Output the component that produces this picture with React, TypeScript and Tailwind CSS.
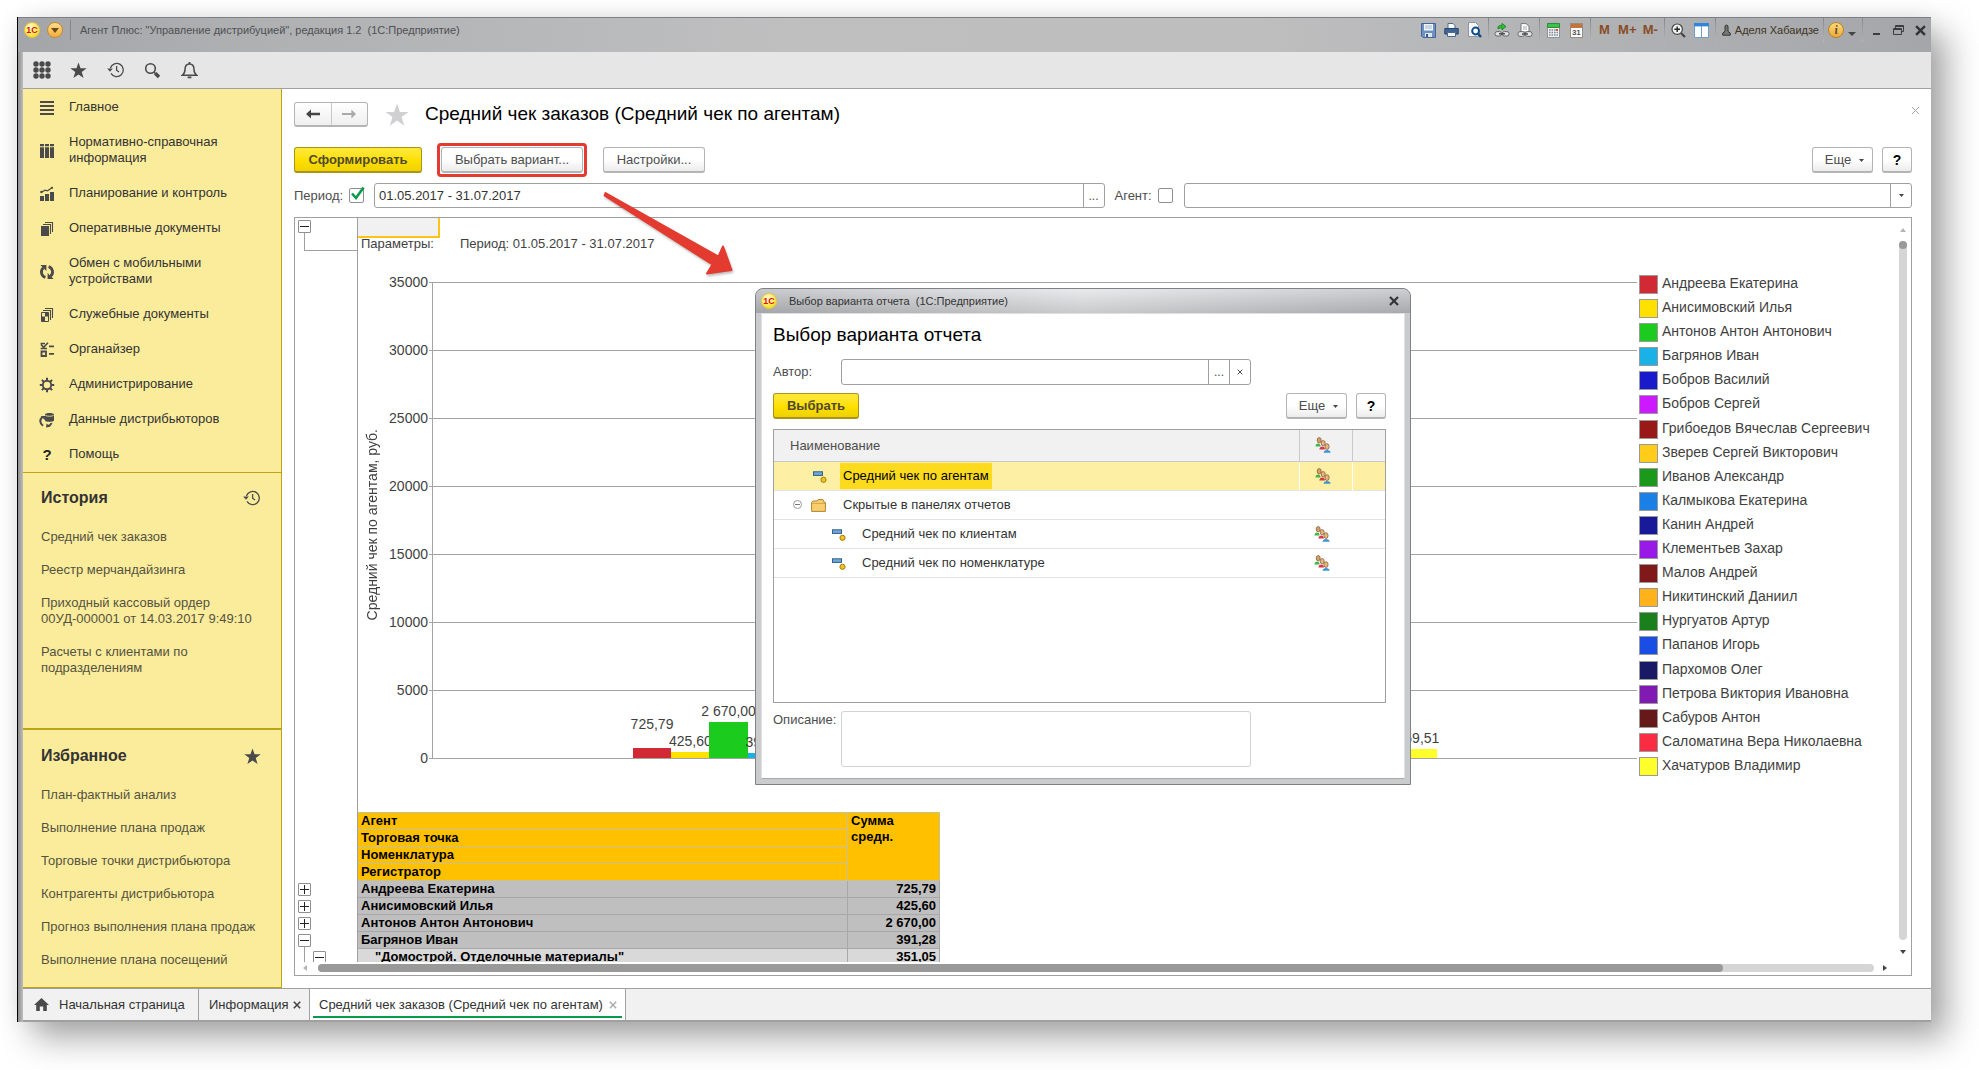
import React from "react";

const ink = "#4a4a4a";

function LogoIcon() {
  return (
    <span className="flex h-4 w-4 shrink-0 items-center justify-center rounded-full border border-[#e8c93a] bg-[radial-gradient(circle_at_40%_30%,#fffbd0,#ffe84a_60%,#f5c400)] text-[9px] leading-none font-bold text-[#e0101a]">
      1С
    </span>
  );
}

function StarIcon({ size = 17, color = ink }: { size?: number; color?: string }) {
  return (
    <svg width={size} height={size} viewBox="0 0 20 20" fill={color}>
      <path d="M10 0.5 12.4 7.4H19.6L13.8 11.7 16 18.9 10 14.6 4 18.9 6.2 11.7 0.4 7.4H7.6Z" />
    </svg>
  );
}

function HistoryIcon() {
  return (
    <svg width="18" height="18" viewBox="0 0 18 18" fill="none" stroke={ink} strokeWidth="1.3">
      <path d="M4 12.4A6.6 6.6 0 1 0 3.4 7" />
      <path d="M0.2 7.6H5.8L3 10.8Z" fill={ink} stroke="none" />
      <path d="M9.6 5V9.2L12 11" />
    </svg>
  );
}

function GridIcon() {
  return (
    <svg width="18" height="18" viewBox="0 0 18 18" fill={ink}>
      {[3, 9, 15].map((y) => [3, 9, 15].map((x) => <circle key={`${x}-${y}`} cx={x} cy={y} r="2.7" />))}
    </svg>
  );
}

function SearchIcon() {
  return (
    <svg width="17" height="17" viewBox="0 0 17 17" fill="none" stroke={ink}>
      <circle cx="6.5" cy="6.5" r="4.8" strokeWidth="1.6" />
      <path d="M10 10 11.4 11.4" strokeWidth="1.4" />
      <path d="M11.2 11.2 15 15" strokeWidth="3.4" />
    </svg>
  );
}

function BellIcon() {
  return (
    <svg width="17" height="18" viewBox="0 0 17 18" fill="none" stroke={ink} strokeWidth="1.5">
      <path d="M1.5 14.2C3.4 12.8 4 11.6 4 8.6 4 5 5.6 3 8.5 3S13 5 13 8.6C13 11.6 13.6 12.8 15.5 14.2Z" />
      <path d="M8.5 3V1M6.6 16.4H10.4" strokeWidth="1.8" />
    </svg>
  );
}

type MenuIconName = "lines" | "catalog" | "plan" | "docs" | "sync" | "service" | "organizer" | "gear" | "data" | "help";

function MenuIcon({ name }: { name: MenuIconName }) {
  if (name === "help") return <span className="text-[15px] font-bold text-[#222]">?</span>;
  return (
    <svg width="16" height="16" viewBox="0 0 16 16" fill={ink} stroke="none">
      {name === "lines" && <path d="M1 1H15V3H1ZM1 5H15V7H1ZM1 9H15V11H1ZM1 13H15V15H1Z" />}
      {name === "catalog" && (
        <path d="M1 1H5V3.2H1ZM6 1H10V3.2H6ZM11 1H15V3.2H11ZM1 4.2H5V15H1ZM6 4.2H10V15H6ZM11 4.2H15V15H11Z" />
      )}
      {name === "plan" && (
        <>
          <path d="M1 10H5V15H1ZM6 8H10V15H6ZM11 6H15V15H11Z" />
          <path d="M2 6.5 6 4.2 8.5 4.8 13 1.8" fill="none" stroke={ink} strokeWidth="1.3" />
          <circle cx="2.4" cy="6" r="1.2" />
          <circle cx="13" cy="1.8" r="1.1" />
        </>
      )}
      {name === "docs" && (
        <>
          <path d="M2 5H10V15H2Z" />
          <path d="M4 3.5H11.5V13M6 1.5H13.5V11" fill="none" stroke={ink} strokeWidth="1.1" />
        </>
      )}
      {name === "service" && (
        <>
          <path d="M2.5 5.5H9.5V14.5H2.5Z" fill="none" stroke={ink} />
          <path d="M6 6H9.5V9.5H6ZM3 9.5H6V14H3Z" />
          <path d="M4 3.5H11.5V13M6 1.5H13.5V11" fill="none" stroke={ink} strokeWidth="1.1" />
        </>
      )}
      {name === "sync" && (
        <>
          <path d="M6.4 13.4A5.6 5.6 0 0 1 4.4 3.8M9.6 2.6A5.6 5.6 0 0 1 11.6 12.2" fill="none" stroke={ink} strokeWidth="2.8" />
          <path d="M1.4 1H7.4V7ZM14.6 15H8.6V9Z" />
        </>
      )}
      {name === "organizer" && (
        <>
          <path d="M2.5 9.5H7V14H2.5Z" fill="none" stroke={ink} strokeWidth="1.8" />
          <path d="M1.6 1.5H6M1.6 6.5H8M2 2.5 4.6 5.4 9 0.8" fill="none" stroke={ink} strokeWidth="1.6" />
          <path d="M10 3.5H15V5.3H10ZM10 11H15V12.8H10Z" />
        </>
      )}
      {name === "gear" && (
        <>
          <circle cx="8" cy="8" r="4.2" fill="none" stroke={ink} strokeWidth="1.9" />
          <path
            d="M8 0.8V4M8 12V15.2M0.8 8H4M12 8H15.2M2.9 2.9 5 5M11 11 13.1 13.1M2.9 13.1 5 11M11 5 13.1 2.9"
            fill="none"
            stroke={ink}
            strokeWidth="2"
          />
        </>
      )}
      {name === "data" && (
        <>
          <path d="M6 2.4C6 0.4 15 0.4 15 2.4V8.4C15 10.2 6 10.2 6 8.4Z" />
          <path d="M6.4 3.4C8 4.6 13 4.6 14.6 3.4" fill="none" stroke="#fbec9c" strokeWidth="0.8" />
          <path d="M4 13.8C0.4 11 0.6 7.4 3.4 5" fill="none" stroke={ink} strokeWidth="2" />
          <path d="M1.6 4H6V8ZM7 15.4 7.6 11.4 11.4 14.8Z" />
          <path d="M9 14C11 13.6 12 12.6 12.6 11" fill="none" stroke={ink} strokeWidth="2" />
        </>
      )}
    </svg>
  );
}

function Caret() {
  return (
    <svg width="5" height="3" viewBox="0 0 5 3" fill="#444">
      <path d="M0 0H5L2.5 3Z" />
    </svg>
  );
}

function CrossIcon({ size, color, width }: { size: number; color: string; width: number }) {
  return (
    <svg width={size} height={size} viewBox="0 0 10 10" stroke={color} strokeWidth={width}>
      <path d="M1 1 9 9M9 1 1 9" />
    </svg>
  );
}

function PeopleIcon() {
  return (
    <svg width="16" height="16" viewBox="0 0 16 16">
      <path d="M0.5 9.4C0.5 5.6 5.6 5.6 5.6 9.4Z" fill="#3fb54a" />
      <ellipse cx="4.2" cy="3.2" rx="2" ry="2.7" fill="#d9a066" stroke="#7a5230" strokeWidth="0.7" />
      <path d="M4.4 12.4C4.4 8.4 10 8.4 10 12.4Z" fill="#d63a4a" />
      <ellipse cx="8.2" cy="6.2" rx="2" ry="2.7" fill="#e8b57c" stroke="#7a5230" strokeWidth="0.7" />
      <path d="M8.6 15.8C8.6 12 15.6 12 15.6 15.8Z" fill="#3a94d6" />
      <ellipse cx="12" cy="9.6" rx="2.1" ry="2.9" fill="#e8b57c" stroke="#7a5230" strokeWidth="0.7" />
    </svg>
  );
}

function VariantIcon() {
  return (
    <svg width="14" height="12" viewBox="0 0 14 12">
      <rect x="0.5" y="0.8" width="9" height="3.6" fill="#6fa8d8" stroke="#2f5f8c" />
      <circle cx="10.5" cy="8.8" r="2.6" fill="#f0c322" stroke="#a37b0a" />
    </svg>
  );
}

function FolderIcon() {
  return (
    <svg width="15" height="13" viewBox="0 0 15 13">
      <path d="M0.6 3.4 2 2H6L7 0.6H12L13 2.6V3.6H14.4V12.4H0.6Z" fill="#f7cf70" stroke="#b5832a" />
      <path d="M1 4.4H14" stroke="#d6a548" />
    </svg>
  );
}

function TitleSep() {
  return <span className="mx-0.5 h-6 w-px shrink-0 bg-gradient-to-b from-[#85878a] to-[#b5b6b8]" />;
}

function TitleButton({ label, children }: { label: string; children: React.ReactNode }) {
  return (
    <button type="button" aria-label={label} className="flex h-6 w-[23px] items-center justify-center">
      {children}
    </button>
  );
}

function WindowButton({ label, children }: { label: string; children: React.ReactNode }) {
  return (
    <button type="button" aria-label={label} className="flex h-6 w-[22px] items-center justify-center">
      {children}
    </button>
  );
}

function TitleBar() {
  return (
    <header className="flex h-[35px] shrink-0 items-start border-t border-[#7d7f82] bg-[linear-gradient(90deg,#a3a5a8,#aeb0b2_12%,#bfbfc0_40%,#bebebf_65%,#a4a6a9)] text-[11px] text-[#4f5054]">
      <div className="flex h-6 items-center gap-[7px] pl-[6px]">
        <LogoIcon />
        <button
          type="button"
          aria-label="Главное меню"
          className="flex h-4 w-4 items-center justify-center rounded-full border border-[#c98a2b] bg-[linear-gradient(#ffdf8e,#f3ab3c)]"
        >
          <svg width="8" height="5" viewBox="0 0 8 5" fill="#6b4a1c">
            <path d="M0 0H8L4 5Z" />
          </svg>
        </button>
        <span className="h-5 w-px bg-[#85878a]" />
        <span className="pl-0.5 whitespace-pre">
          {'Агент Плюс: "Управление дистрибуцией", редакция 1.2  (1С:Предприятие)'}
        </span>
      </div>
      <div className="ml-auto flex h-6 items-center">
        <TitleButton label="Сохранить">
          <svg width="15" height="15" viewBox="0 0 15 15">
            <path d="M0.5 0.5H14.5V14.5H2L0.5 13Z" fill="#6d92c2" stroke="#44659a" />
            <path d="M3 1H12V7.5H3Z" fill="#f2f6fb" />
            <path d="M4 3H11M4 5H11" stroke="#9fb4cf" />
            <path d="M4 10H11V14H4Z" fill="#dfe6ef" />
            <path d="M5 11H7V14H5Z" fill="#34568a" />
          </svg>
        </TitleButton>
        <TitleButton label="Печать">
          <svg width="15" height="14" viewBox="0 0 15 14">
            <path d="M4 0.5H9L11 2.5V6H4Z" fill="#fff" stroke="#4a6a96" />
            <path d="M0.8 5.5H14.2V11H0.8Z" fill="#3f6596" stroke="#2a4468" />
            <path d="M3.5 9.5H11.5V13.5H3.5Z" fill="#f4f6fa" stroke="#4a6a96" />
          </svg>
        </TitleButton>
        <TitleButton label="Предварительный просмотр">
          <svg width="15" height="16" viewBox="0 0 15 16">
            <path d="M1.5 0.5H8.5L11.5 3.5V14.5H1.5Z" fill="#f7f7f7" stroke="#8996a8" />
            <circle cx="8.6" cy="9" r="3.4" fill="#fff" stroke="#0f4a86" strokeWidth="2" />
            <path d="M11 11.6 14 15" stroke="#0f4a86" strokeWidth="2.4" />
          </svg>
        </TitleButton>
        <TitleSep />
        <TitleButton label="Получить ссылку">
          <svg width="16" height="15" viewBox="0 0 16 15">
            <path d="M4 4C5 2.4 6 2.4 8 2.4V0.4L12 3.6 8 6.8V4.8C6.4 4.8 5.4 5 4 6Z" fill="#2fc32f" stroke="#0f7a1a" strokeWidth="0.8" />
            <rect x="1" y="8.6" width="6.6" height="4.4" rx="2" fill="#e4e4e4" stroke="#666" />
            <rect x="8.4" y="8.6" width="6.6" height="4.4" rx="2" fill="#e4e4e4" stroke="#666" />
            <path d="M5 10.8H11" stroke="#444" strokeWidth="1.4" />
          </svg>
        </TitleButton>
        <TitleButton label="Перейти по ссылке">
          <svg width="16" height="15" viewBox="0 0 16 15">
            <path d="M4 0.6H9L12 3.4V9H4Z" fill="#fff" stroke="#777" />
            <path d="M6 4H10M6 6H10" stroke="#aaa" />
            <rect x="1" y="8.6" width="6.6" height="4.8" rx="2" fill="#e4e4e4" stroke="#666" />
            <rect x="8.4" y="8.6" width="6.6" height="4.8" rx="2" fill="#e4e4e4" stroke="#666" />
            <path d="M5 11H11" stroke="#444" strokeWidth="1.4" />
          </svg>
        </TitleButton>
        <TitleSep />
        <TitleButton label="Калькулятор">
          <svg width="13" height="15" viewBox="0 0 13 15">
            <path d="M0.5 0.5H12.5V14.5H0.5Z" fill="#f2f2f2" stroke="#8c9298" />
            <path d="M0.5 0.5H12.5V4.5H0.5Z" fill="#3cc24a" stroke="#2a8f38" />
            <path d="M2 7H11M2 9.5H11M2 12H11" stroke="#7d8894" strokeWidth="1.4" strokeDasharray="1.6 0.9" />
            <path d="M9 7H11" stroke="#d33" strokeWidth="1.4" />
          </svg>
        </TitleButton>
        <TitleButton label="Календарь">
          <span className="flex h-[15px] w-[13px] flex-col border border-[#9a8a80] bg-white">
            <span className="h-1 shrink-0 bg-[#c5743a]" />
            <span className="text-center text-[8px] leading-[9px] font-bold text-[#555]">31</span>
          </span>
        </TitleButton>
        <TitleSep />
        {["M", "M+", "M-"].map((m) => (
          <button key={m} type="button" className="h-6 w-[23px] text-center text-[13px] font-bold text-[#8a4b25]">
            {m}
          </button>
        ))}
        <TitleSep />
        <TitleButton label="Масштаб">
          <svg width="15" height="15" viewBox="0 0 15 15">
            <circle cx="6.2" cy="6.2" r="5.2" fill="#f2f2f2" stroke="#444" strokeWidth="1.2" />
            <path d="M3.4 6.2H9M6.2 3.4V9" stroke="#222" strokeWidth="1.4" />
            <path d="M10.2 10.2 14 14" stroke="#444" strokeWidth="2.2" />
          </svg>
        </TitleButton>
        <TitleButton label="Панели">
          <svg width="15" height="15" viewBox="0 0 15 15">
            <path d="M0.5 0.5H14.5V14.5H0.5Z" fill="#fff" stroke="#6f9cc8" />
            <path d="M0 0H15V3.4H0Z" fill="#2f86dd" />
            <path d="M7.5 3V15" stroke="#6f9cc8" />
          </svg>
        </TitleButton>
        <TitleSep />
        <button type="button" className="flex h-6 items-center gap-1 pr-0.5 pl-1 text-[#3e3422]">
          <svg width="9" height="12" viewBox="0 0 9 12" fill="#777" stroke="#333">
            <path d="M0.8 11.2V9L3 7.4V3A1.5 2 0 0 1 6 3V7.4L8.2 9V11.2Z" />
          </svg>
          Аделя Хабаидзе
        </button>
        <TitleSep />
        <button
          type="button"
          aria-label="Информация о программе"
          className="ml-0.5 flex h-4 w-4 items-center justify-center rounded-full border border-[#b98427] bg-[linear-gradient(#ffd877,#eda93a)] font-serif text-[11px] leading-none font-bold text-[#5a4a30] italic"
        >
          i
        </button>
        <span className="flex w-4 justify-center pt-2">
          <svg width="8" height="4" viewBox="0 0 8 4" fill="#444">
            <path d="M0 0H8L4 4Z" />
          </svg>
        </span>
        <TitleSep />
        <WindowButton label="Свернуть">
          <span className="mt-2 h-0.5 w-[7px] bg-[#3d3d3d]" />
        </WindowButton>
        <WindowButton label="Восстановить">
          <svg width="11" height="10" viewBox="0 0 11 10" fill="none" stroke="#3d3d3d">
            <path d="M2.5 3V0.5H10.5V6.5H8.5M2.5 1.5H10.5" />
            <path d="M0.5 3.5H8.5V9.5H0.5ZM0.5 4.5H8.5" />
          </svg>
        </WindowButton>
        <WindowButton label="Закрыть">
          <CrossIcon size={11} color="#333" width={2.2} />
        </WindowButton>
      </div>
    </header>
  );
}

const tools: [string, React.ReactNode][] = [
  ["Меню функций", <GridIcon />],
  ["Избранное", <StarIcon />],
  ["История", <HistoryIcon />],
  ["Поиск", <SearchIcon />],
  ["Оповещения", <BellIcon />],
];

const menu: [MenuIconName, string][] = [
  ["lines", "Главное"],
  ["catalog", "Нормативно-справочная информация"],
  ["plan", "Планирование и контроль"],
  ["docs", "Оперативные документы"],
  ["sync", "Обмен с мобильными устройствами"],
  ["service", "Служебные документы"],
  ["organizer", "Органайзер"],
  ["gear", "Администрирование"],
  ["data", "Данные дистрибьюторов"],
  ["help", "Помощь"],
];

const history = [
  "Средний чек заказов",
  "Реестр мерчандайзинга",
  "Приходный кассовый ордер 00УД-000001 от 14.03.2017 9:49:10",
  "Расчеты с клиентами по подразделениям",
];

const favourites = [
  "План-фактный анализ",
  "Выполнение плана продаж",
  "Торговые точки дистрибьютора",
  "Контрагенты дистрибьютора",
  "Прогноз выполнения плана продаж",
  "Выполнение плана посещений",
];

function LinkSection({ title, icon, items }: { title: string; icon: React.ReactNode; items: string[] }) {
  return (
    <>
      <div className="flex h-12 items-center justify-between pt-0.5 pr-5 pl-[18px]">
        <h2 className="text-base font-bold text-[#333]">{title}</h2>
        {icon}
      </div>
      <ul>
        {items.map((t) => (
          <li key={t} className="pr-4 pl-[18px]">
            <a href="#" className="block pt-2 pb-[9px] leading-4 text-[#55523f]">
              {t}
            </a>
          </li>
        ))}
      </ul>
    </>
  );
}

function Sidebar() {
  return (
    <aside className="flex w-[259px] shrink-0 flex-col border-r border-b border-[#b9a416] bg-[#fbec9c] text-[13px]">
      <nav className="border-b border-[#b9a416] pt-px">
        {menu.map(([icon, text]) => (
          <a key={text} href="#" className="flex items-center py-[9px] leading-4 text-[#333]">
            <span className="ml-4 flex h-[17px] w-4 shrink-0 items-center justify-center">
              <MenuIcon name={icon} />
            </span>
            <span className="ml-3.5 w-[160px] pb-px">{text}</span>
          </a>
        ))}
      </nav>
      <section className="flex-1 border-b-2 border-[#b9a416]">
        <LinkSection title="История" icon={<HistoryIcon />} items={history} />
      </section>
      <section className="pt-px pb-2.5">
        <LinkSection title="Избранное" icon={<StarIcon />} items={favourites} />
      </section>
    </aside>
  );
}

function PlainButton({ className = "", children, ...rest }: React.ButtonHTMLAttributes<HTMLButtonElement>) {
  return (
    <button
      type="button"
      className={`flex h-[26px] items-center justify-center rounded-[3px] border border-b-2 border-[#b4b4b4] bg-gradient-to-b from-white via-white to-[#ececec] pt-px text-[13px] text-[#4d4d4d] ${className}`}
      {...rest}
    >
      {children}
    </button>
  );
}

function YellowButton({ className = "", children }: { className?: string; children: React.ReactNode }) {
  return (
    <button
      type="button"
      className={`flex h-[26px] items-center justify-center rounded-[3px] border border-b-2 border-[#a8941a] bg-gradient-to-b from-[#ffe838] via-[#ffe100] to-[#efd100] pt-px text-[13px] font-bold text-[#4f4a33] ${className}`}
    >
      {children}
    </button>
  );
}

const agents: { name: string; fill: string; value?: number; label?: string; raised?: boolean }[] = [
  { name: "Андреева Екатерина", fill: "#d12a35", value: 725.79, label: "725,79", raised: true },
  { name: "Анисимовский Илья", fill: "#ffe100", value: 425.6, label: "425,60" },
  { name: "Антонов Антон Антонович", fill: "#1bcc1f", value: 2670, label: "2 670,00" },
  { name: "Багрянов Иван", fill: "#1ab2e6", value: 391.28, label: "391,28" },
  { name: "Бобров Василий", fill: "#191acb" },
  { name: "Бобров Сергей", fill: "#cc19ff" },
  { name: "Грибоедов Вячеслав Сергеевич", fill: "#991919" },
  { name: "Зверев Сергей Викторович", fill: "#ffcc19" },
  { name: "Иванов Александр", fill: "#1a991b" },
  { name: "Калмыкова Екатерина", fill: "#1a80e6" },
  { name: "Канин Андрей", fill: "#191a99" },
  { name: "Клементьев Захар", fill: "#991ae6" },
  { name: "Малов Андрей", fill: "#801919" },
  { name: "Никитинский Даниил", fill: "#ffb219" },
  { name: "Нургуатов Артур", fill: "#1a801b" },
  { name: "Папанов Игорь", fill: "#1a4de6" },
  { name: "Пархомов Олег", fill: "#191a66" },
  { name: "Петрова Виктория Ивановна", fill: "#801ab3" },
  { name: "Сабуров Антон", fill: "#661919" },
  { name: "Саломатина Вера Николаевна", fill: "#f92c44" },
  { name: "Хачатуров Владимир", fill: "#ffff2b", value: 659.51, label: "659,51" },
];

const ticks = [35000, 30000, 25000, 20000, 15000, 10000, 5000, 0];

function Chart() {
  return (
    <div className="flex pt-6 text-sm leading-4 text-[#3f3f3f]">
      <div className="flex w-7 items-center justify-center">
        <span className="rotate-180 whitespace-nowrap [writing-mode:vertical-rl]">Средний чек по агентам, руб.</span>
      </div>
      <div className="flex h-[492px] w-[42px] flex-col items-end justify-between">
        {ticks.map((t) => (
          <span key={t}>{t}</span>
        ))}
      </div>
      <div className="mt-2 ml-1 flex h-[477px] flex-1 flex-col border-l border-[#a3a3a3]">
        <div className="relative flex flex-1 flex-col">
          {ticks.slice(0, -1).map((t) => (
            <div key={t} className="-ml-1 flex-1 border-t border-[#a3a3a3]" />
          ))}
          <div className="absolute inset-x-0 bottom-0 flex h-full items-end px-[16.6%]">
            {agents.map((a) => (
              <div key={a.name} className="flex min-w-0 flex-1 flex-col items-center">
                {a.label && (
                  <>
                    <span className={`whitespace-nowrap ${a.raised ? "pb-4" : "pb-[3px]"}`}>{a.label}</span>
                    <span
                      className="w-full"
                      style={{ height: Math.round(((a.value ?? 0) / 5000) * 68), backgroundColor: a.fill }}
                    />
                  </>
                )}
              </div>
            ))}
          </div>
        </div>
        <div className="-ml-1 border-t border-[#a3a3a3]" />
      </div>
      <ul className="mt-px ml-0.5 flex h-[501px] w-64 flex-col justify-between">
        {agents.map((a) => (
          <li key={a.name} className="flex h-[19px] gap-1 whitespace-nowrap">
            <span className="h-[19px] w-[19px] border border-[#9a9a9a]" style={{ backgroundColor: a.fill }} />
            {a.name}
          </li>
        ))}
      </ul>
    </div>
  );
}

function TreeBox({ open }: { open: boolean }) {
  return (
    <button
      type="button"
      aria-label={open ? "Свернуть" : "Развернуть"}
      className="flex h-[13px] w-[13px] items-center justify-center rounded-[1px] border border-[#8f8f8f] bg-white"
    >
      <svg width="9" height="9" viewBox="0 0 9 9" stroke="#222">
        <path d={open ? "M0 4.5H9" : "M0 4.5H9M4.5 0V9"} />
      </svg>
    </button>
  );
}

const rows: [string, string][] = [
  ["Андреева Екатерина", "725,79"],
  ["Анисимовский Илья", "425,60"],
  ["Антонов Антон Антонович", "2 670,00"],
  ["Багрянов Иван", "391,28"],
];

function ReportTable() {
  return (
    <table className="mt-9 w-[582px] table-fixed border-collapse text-left text-[13px] leading-4 font-bold text-black">
      <colgroup>
        <col />
        <col className="w-[92px]" />
      </colgroup>
      <thead>
        {["Агент", "Торговая точка", "Номенклатура", "Регистратор"].map((h, i) => (
          <tr key={h} className="h-[17px] bg-[#ffc000]">
            <th className="border border-l-0 border-[#c9bf98] py-0 pl-[3px]">{h}</th>
            {i === 0 && (
              <th rowSpan={4} className="border border-[#c9bf98] py-0 pr-6 pl-[3px] align-top">
                Сумма средн.
              </th>
            )}
          </tr>
        ))}
      </thead>
      <tbody>
        {rows.map(([n, v]) => (
          <tr key={n} className="h-[17px] bg-[#bfbfbf]">
            <td className="border border-l-0 border-[#a8a8a8] py-0 pl-[3px]">{n}</td>
            <td className="border border-[#a8a8a8] py-0 pr-[3px] text-right">{v}</td>
          </tr>
        ))}
        <tr className="h-[17px] bg-[#d9d9d9]">
          <td className="border border-l-0 border-[#a8a8a8] py-0 pl-[17px]">"Домострой. Отделочные материалы"</td>
          <td className="border border-[#a8a8a8] py-0 pr-[3px] text-right">351,05</td>
        </tr>
      </tbody>
    </table>
  );
}

function Report() {
  return (
    <div className="mt-[9px] flex min-h-0 flex-1 flex-col border border-[#a0a0a0] bg-white">
      <div className="flex min-h-0 flex-1">
        <div className="flex min-w-0 flex-1 overflow-hidden">
          <div className="h-[760px] w-[63px] shrink-0 border-r border-[#a0a0a0] pt-0.5 pl-[3px]">
            <TreeBox open />
            <div className="ml-1.5 h-[18px] border-b border-l border-[#a0a0a0]" />
            <div className="mt-[632px] flex flex-col gap-1">
              <TreeBox open={false} />
              <TreeBox open={false} />
              <TreeBox open={false} />
              <TreeBox open />
            </div>
            <div className="ml-1.5 flex h-[30px] border-l border-[#a0a0a0] pt-1 pl-2">
              <TreeBox open />
            </div>
          </div>
          <div className="min-w-0 flex-1">
            <div className="h-5 w-[82px] border-r-2 border-b-2 border-[#fcc419] bg-[#f1f1f1]" />
            <div className="flex h-3 items-center gap-[26px] pl-[3px] text-[13px] leading-3 text-[#3f3f3f]">
              <span>Параметры:</span>
              <span>Период: 01.05.2017 - 31.07.2017</span>
            </div>
            <Chart />
            <ReportTable />
          </div>
        </div>
        <div className="flex w-4 flex-col items-center pt-2.5 pb-2">
          <svg width="6" height="4" viewBox="0 0 6 4" fill="#b5b5b5">
            <path d="M0 4H6L3 0Z" />
          </svg>
          <div className="mt-[9px] mb-2.5 w-2 flex-1 rounded-full bg-[#d5d5d5]">
            <div className="h-2 w-2 rounded-full bg-[#999]" />
          </div>
          <svg width="6" height="4" viewBox="0 0 6 4" fill="#444">
            <path d="M0 0H6L3 4Z" />
          </svg>
        </div>
      </div>
      <div className="flex h-[13px] items-center pr-6 pb-px pl-2">
        <svg width="4" height="6" viewBox="0 0 4 6" fill="#b5b5b5">
          <path d="M4 0V6L0 3Z" />
        </svg>
        <div className="mr-[9px] ml-[11px] h-2 flex-1 rounded-full bg-[#d5d5d5]">
          <div className="h-2 w-[90.3%] rounded-full bg-[#999]" />
        </div>
        <svg width="4" height="6" viewBox="0 0 4 6" fill="#444">
          <path d="M0 0V6L4 3Z" />
        </svg>
      </div>
    </div>
  );
}

function CheckBox({ id, checked = false }: { id: string; checked?: boolean }) {
  return (
    <span className="relative h-[15px] w-[15px] shrink-0">
      <input
        id={id}
        type="checkbox"
        defaultChecked={checked}
        className="peer block h-[15px] w-[15px] appearance-none rounded-[2px] border border-[#8f8f8f] bg-white"
      />
      <svg
        width="15"
        height="15"
        viewBox="0 0 15 15"
        className="pointer-events-none absolute -top-0.5 left-0.5 hidden peer-checked:block"
        fill="none"
        stroke="#079a4c"
        strokeWidth="2.6"
      >
        <path d="M1 7.5 5 12 12.6 1.6" />
      </svg>
    </span>
  );
}

function MainArea() {
  return (
    <main className="flex min-w-0 flex-1 flex-col bg-white pr-[19px] pb-3 pl-3 text-[13px] text-[#4d4d4d]">
      <div className="flex h-[51px] items-center">
        <div className="flex h-[25px] w-[74px] rounded-[3px] border border-b-2 border-[#b4b4b4] bg-gradient-to-b from-white to-[#efefef]">
          <button type="button" aria-label="Назад" className="flex flex-1 items-center justify-center border-r border-[#c8c8c8]">
            <svg width="14" height="10" viewBox="0 0 14 10" fill="#444">
              <path d="M0 5 5 0.4V3.8H14V6.2H5V9.6Z" />
            </svg>
          </button>
          <button type="button" aria-label="Вперед" className="flex flex-1 items-center justify-center">
            <svg width="14" height="10" viewBox="0 0 14 10" fill="#aaa">
              <path d="M14 5 9.4 0.4V4.1H0V5.9H9.4V9.6Z" />
            </svg>
          </button>
        </div>
        <button type="button" aria-label="В избранное" className="ml-[17px]">
          <StarIcon size={24} color="#cfd0d2" />
        </button>
        <h1 className="ml-4 text-[19px] text-black">Средний чек заказов (Средний чек по агентам)</h1>
        <button type="button" aria-label="Закрыть форму" className="-mr-2 mb-2 ml-auto">
          <CrossIcon size={9} color="#a5a5a5" width={1.1} />
        </button>
      </div>
      <div className="mt-[3px] flex h-[34px] items-center">
        <YellowButton className="w-32">Сформировать</YellowButton>
        <div className="ml-[15px] rounded-[4px] border-[3px] border-[#e33b30] p-px">
          <PlainButton className="w-[142px]">Выбрать вариант...</PlainButton>
        </div>
        <PlainButton className="ml-4 w-[102px]">Настройки...</PlainButton>
        <PlainButton className="ml-auto w-[61px] gap-2 pl-1">
          Еще <Caret />
        </PlainButton>
        <PlainButton aria-label="Справка" className="ml-[9px] w-[30px]">
          <b className="text-sm text-black">?</b>
        </PlainButton>
      </div>
      <div className="mt-1.5 flex h-[25px] items-center">
        <label htmlFor="period-on" className="w-[55px] shrink-0">
          Период:
        </label>
        <CheckBox id="period-on" checked />
        <div className="ml-2.5 flex h-[25px] min-w-0 flex-1 rounded-[3px] border border-[#a0a0a0]">
          <input
            aria-label="Период"
            defaultValue="01.05.2017 - 31.07.2017"
            className="min-w-0 flex-1 rounded-[3px] px-1 text-[#333] outline-none"
          />
          <button type="button" aria-label="Выбрать период" className="w-[21px] border-l border-[#a0a0a0] text-xs">
            ...
          </button>
        </div>
        <label htmlFor="agent-on" className="ml-2.5 w-[43px] shrink-0">
          Агент:
        </label>
        <CheckBox id="agent-on" />
        <div className="relative ml-[11px] h-[25px] min-w-0 flex-1">
          <select aria-label="Агент" className="h-full w-full appearance-none rounded-[3px] border border-[#a0a0a0] bg-white px-1">
            <option></option>
          </select>
          <span className="pointer-events-none absolute inset-y-px right-px flex w-[21px] items-center justify-center border-l border-[#a0a0a0]">
            <Caret />
          </span>
        </div>
      </div>
      <Report />
    </main>
  );
}

function Tabs() {
  return (
    <footer className="flex h-[34px] shrink-0 border-t border-b-2 border-[#a0a0a0] bg-[#f1f1f1] text-[13px] text-[#333]">
      <button type="button" className="flex w-44 items-center border-r border-[#a0a0a0] pl-[11px]">
        <svg width="15" height="13" viewBox="0 0 15 13" fill={ink} className="mr-2.5">
          <path d="M7.5 0 15 7H12.8V13H9.2V8.6H5.8V13H2.2V7H0Z" />
        </svg>
        Начальная страница
      </button>
      <button type="button" className="flex w-[111px] items-center border-r border-[#a0a0a0] pl-2.5">
        Информация
        <span className="mr-2 ml-auto">
          <CrossIcon size={8} color="#444" width={2} />
        </span>
      </button>
      <button type="button" className="relative flex w-[316px] items-center border-r border-[#a0a0a0] bg-white pl-[9px]">
        Средний чек заказов (Средний чек по агентам)
        <span className="mr-2 ml-auto">
          <CrossIcon size={8} color="#aaa" width={1.8} />
        </span>
        <span className="absolute inset-x-[3px] bottom-0.5 h-0.5 bg-[#079a4c]" />
      </button>
    </footer>
  );
}

const variants = [
  { text: "Средний чек по агентам", level: 0, selected: true },
  { text: "Скрытые в панелях отчетов", level: 0, folder: true },
  { text: "Средний чек по клиентам", level: 1 },
  { text: "Средний чек по номенклатуре", level: 1 },
];

function VariantDialog() {
  return (
    <section
      role="dialog"
      aria-label="Выбор варианта отчета"
      className="absolute top-[271px] left-[737px] w-[656px] rounded-t-lg border border-[#7f8184] bg-[#c9cbcd] px-[5px] pb-[5px] text-[13px] text-[#4d4d4d]"
    >
      <div className="-mx-[5px] flex h-6 items-center rounded-t-lg bg-[linear-gradient(90deg,#8f919440,#ffffff60_50%,#a0a2a540),linear-gradient(#dcdddf,#a9abae)] pr-[11px] pl-[5px] text-[11px] text-[#333]">
        <LogoIcon />
        <span className="ml-3 whitespace-pre">{"Выбор варианта отчета  (1С:Предприятие)"}</span>
        <button type="button" aria-label="Закрыть окно" className="ml-auto">
          <CrossIcon size={10} color="#333" width={2.2} />
        </button>
      </div>
      <div className="border border-[#dfe0e2] border-b-[#a8aaad] bg-white pr-[18px] pb-[11px] pl-[11px]">
        <h2 className="flex h-[42px] items-center text-[19px] text-black">Выбор варианта отчета</h2>
        <div className="mt-[3px] flex items-center">
          <label htmlFor="author" className="w-[68px]">
            Автор:
          </label>
          <div className="flex h-[26px] w-[410px] rounded-[3px] border border-[#a0a0a0]">
            <input id="author" className="min-w-0 flex-1 rounded-[3px] px-1 outline-none" />
            <button type="button" aria-label="Выбрать автора" className="w-[21px] border-l border-[#a0a0a0] text-xs">
              ...
            </button>
            <button type="button" aria-label="Очистить" className="flex w-[21px] items-center justify-center border-l border-[#a0a0a0]">
              <CrossIcon size={6} color="#444" width={1.6} />
            </button>
          </div>
        </div>
        <div className="mt-2 flex items-center">
          <YellowButton className="w-[86px]">Выбрать</YellowButton>
          <PlainButton className="ml-auto w-[61px] gap-2 pl-1">
            Еще <Caret />
          </PlainButton>
          <PlainButton aria-label="Справка" className="ml-[9px] w-[30px]">
            <b className="text-sm text-black">?</b>
          </PlainButton>
        </div>
        <div className="mt-2.5 h-[274px] border border-[#a0a0a0]">
          <table className="w-full table-fixed border-collapse">
            <colgroup>
              <col />
              <col className="w-[53px]" />
              <col className="w-[33px]" />
            </colgroup>
            <thead>
              <tr className="h-[31px] bg-[#f1f1f1]">
                <th className="border-r border-b border-[#c9c9c9] pl-4 text-left font-normal">Наименование</th>
                <th aria-label="Доступ" className="border-r border-b border-[#c9c9c9] pl-[15px]">
                  <PeopleIcon />
                </th>
                <th aria-label="Прочее" className="border-b border-[#c9c9c9]" />
              </tr>
            </thead>
            <tbody>
              {variants.map((v) => (
                <tr
                  key={v.text}
                  className={`h-[29px] border-b border-[#e2e2e2] text-[#333] ${v.selected ? "bg-[#fdf0a4]" : ""}`}
                >
                  <td className={`p-0 ${v.selected ? "border-r border-white text-black" : ""}`}>
                    <div className={`flex items-center ${v.level ? "pl-14" : v.folder ? "pl-[19px]" : "pl-[37px]"}`}>
                      {v.folder && (
                        <button
                          type="button"
                          aria-label="Свернуть группу"
                          className="mr-[9px] flex h-[9px] w-[9px] items-center justify-center rounded-full border border-[#999]"
                        >
                          <span className="h-px w-[5px] bg-[#777]" />
                        </button>
                      )}
                      <span className={`flex w-[29px] pt-0.5 ${v.folder ? "" : "pl-0.5"}`}>
                        {v.folder ? <FolderIcon /> : <VariantIcon />}
                      </span>
                      <span className={`flex h-[26px] items-center px-[3px] ${v.selected ? "bg-[#fcdb1f]" : ""}`}>{v.text}</span>
                    </div>
                  </td>
                  <td className={`py-0 pr-0 pl-[15px] ${v.selected ? "border-r border-white" : ""}`}>{!v.folder && <PeopleIcon />}</td>
                  <td />
                </tr>
              ))}
            </tbody>
          </table>
        </div>
        <div className="mt-2 flex">
          <label htmlFor="description" className="w-[68px] pt-px leading-4">
            Описание:
          </label>
          <textarea id="description" className="block h-14 w-[410px] resize-none rounded-[3px] border border-[#d2d2d2] p-1 outline-none" />
        </div>
      </div>
    </section>
  );
}

function PointerArrow() {
  return (
    <svg
      width="134"
      height="90"
      viewBox="602 190 134 90"
      className="pointer-events-none absolute top-[173px] left-[584px] drop-shadow-[1px_2px_1px_rgba(0,0,0,0.25)]"
      fill="#e33b30"
      stroke="#e33b30"
      strokeWidth="2"
      strokeLinejoin="round"
    >
      <path d="M605.5 193 718.5 256.5 723 246.5 731.5 270 707 273.5 712.5 264.5 604.5 195.5Z" />
    </svg>
  );
}

export default function App() {
  return (
    <div className="flex h-screen bg-white pt-[17px] pr-12 pb-12 pl-[17px] font-['Liberation_Sans',Arial,sans-serif]">
      <div className="relative flex min-w-0 flex-1 flex-col border-l border-black bg-white shadow-[16px_16px_32px_rgba(0,0,0,0.35),0_0_20px_rgba(0,0,0,0.06)]">
        <TitleBar />
        <div className="flex min-h-0 flex-1 flex-col bg-[linear-gradient(90deg,#8f8f8f,#bdbdbd_5px)] pl-[5px]">
          <div className="flex h-[37px] shrink-0 items-center border-b border-[#a0a0a0] bg-[#e6e6e6]">
            {tools.map(([label, icon]) => (
              <button key={label} type="button" aria-label={label} className="flex h-full w-[37px] items-center justify-center">
                {icon}
              </button>
            ))}
          </div>
          <div className="flex min-h-0 flex-1">
            <Sidebar />
            <MainArea />
          </div>
          <Tabs />
        </div>
        <VariantDialog />
        <PointerArrow />
      </div>
    </div>
  );
}
